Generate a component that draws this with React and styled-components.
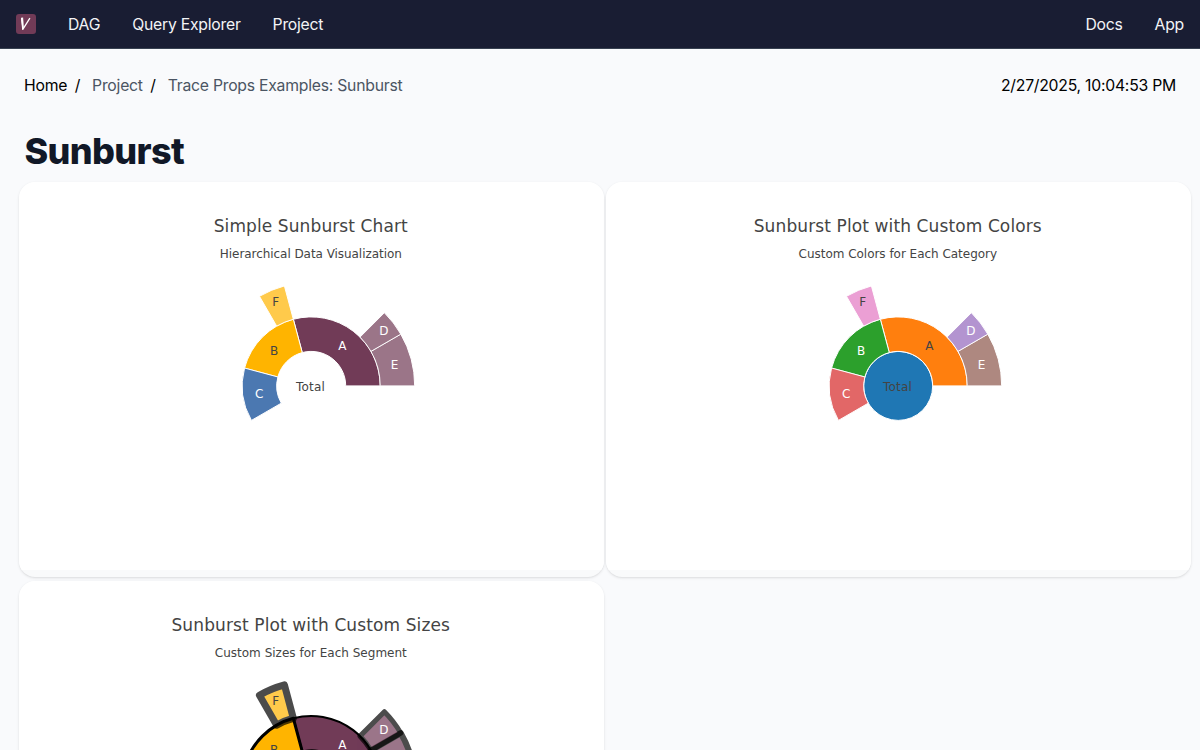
import React from "react";
import styled, { createGlobalStyle } from "styled-components";

const GlobalStyle = createGlobalStyle`
  *, *::before, *::after { box-sizing: border-box; }
  html, body { margin: 0; padding: 0; }
  body {
    background: #f9fafb;
    color: #000;
    font-family: Inter, "Liberation Sans", sans-serif;
    font-size: 15.75px;
    line-height: 24px;
    letter-spacing: -0.24px;
  }
`;

const Page = styled.div`
  height: 100vh;
  overflow: hidden;
  background: #f9fafc;
`;

const NavBar = styled.nav`
  display: flex;
  align-items: center;
  justify-content: space-between;
  height: 49px;
  padding: 0 16px;
  background: #191d33;
  border-bottom: 1px solid #374151;
`;

const NavGroup = styled.div`
  display: flex;
  align-items: center;
  gap: 32px;
`;

const NavLink = styled.a`
  padding-top: 2px;
  color: #f3f4f6;
`;

const Logo = styled.svg`
  display: block;
  width: 20px;
  height: 20px;
`;

const TopRow = styled.div`
  display: flex;
  align-items: center;
  justify-content: space-between;
  padding: 25px 24px 0;
`;

const Crumbs = styled.div`
  display: flex;
`;

const Crumb = styled.span`
  color: ${(p) => (p.$home ? "#000" : "#4b5563")};
`;

const Slash = styled.span`
  margin: 0 12px 0 7.5px;
`;

const Heading = styled.h1`
  margin: 33px 0 11px 24.5px;
  font-size: 36px;
  line-height: 40px;
  font-weight: 780;
  letter-spacing: -0.65px;
  color: #111827;
`;

const Grid = styled.div`
  display: grid;
  grid-template-columns: 585px 585px;
  gap: 4px 2px;
  padding-left: 18.5px;
`;

const Card = styled.section`
  height: 395px;
  border-radius: 16px;
  overflow: hidden;
  background: #f9fafb;
  box-shadow: 0 1px 3px rgba(0, 0, 0, 0.1), 0 1px 2px -1px rgba(0, 0, 0, 0.1);
`;

const Plot = styled.svg`
  display: block;
  width: 585px;
  height: 388px;
  background: #fff;
`;

const PlotText = styled.text`
  font-family: "DejaVu Sans", Verdana, sans-serif;
  font-size: ${(p) => (p.$title ? 17 : 12)}px;
  letter-spacing: 0;
  fill: ${(p) => (p.$light ? "#fff" : "#444")};
  text-anchor: middle;
  white-space: pre;
`;

const CX = 292.2;
const CY = 203.9;
const RING = 34.5;

const point = (r, deg) => {
  const a = (deg * Math.PI) / 180;
  return `${(CX + r * Math.cos(a)).toFixed(3)} ${(CY - r * Math.sin(a)).toFixed(3)}`;
};

const sector = (level, from, to) => {
  const r0 = RING * level;
  const r1 = RING * (level + 1);
  return `M${point(r0, from)}A${r0} ${r0} 0 0 0 ${point(r0, to)}L${point(r1, to)}A${r1} ${r1} 0 0 1 ${point(r1, from)}Z`;
};

// Angles run counter-clockwise from three o'clock; leaves are drawn translucent.
const SLICES = [
  { id: "A", level: 1, from: 0, to: 105, x: 31.1, y: -36.1 },
  { id: "B", level: 1, from: 105, to: 165, x: -37.2, y: -30.9 },
  { id: "C", level: 1, from: 165, to: 210, x: -52, y: 12.1, leaf: true },
  { id: "E", level: 2, from: 0, to: 30, x: 83.3, y: -16.9, leaf: true },
  { id: "D", level: 2, from: 30, to: 45, x: 72.7, y: -50.9, leaf: true },
  { id: "F", level: 2, from: 105, to: 120, x: -35.4, y: -79.9, leaf: true },
];

function Sunburst({ title, titleWidth, subtitle, subtitleWidth, colors, light, widths, line = "#fff" }) {
  const width = (id) => (widths ? widths[id] : 1);
  return (
    <Card>
      <Plot viewBox="0 0 585 388">
        <PlotText $title x={CX - 0.5} y={50} textLength={titleWidth}>{title}</PlotText>
        <PlotText x={CX - 0.4} y={76} textLength={subtitleWidth}>{subtitle}</PlotText>
        <circle cx={CX} cy={CY} r={RING} fill={colors.Total || "none"} stroke={line} strokeWidth={width("Total")} />
        {SLICES.map((s) => (
          <path
            key={s.id}
            d={sector(s.level, s.from, s.to)}
            fill={colors[s.id]}
            stroke={line}
            strokeWidth={width(s.id)}
            strokeLinejoin="round"
            opacity={s.leaf ? 0.7 : 1}
          />
        ))}
        {SLICES.map((s) => (
          <PlotText key={s.id} $light={light.includes(s.id)} x={CX + s.x} y={CY + s.y}>{s.id}</PlotText>
        ))}
        <PlotText x={CX - 0.8} y={CY + 5.1} textLength={29}>Total</PlotText>
      </Plot>
    </Card>
  );
}

const BRAND = { A: "#713b57", B: "#ffb400", C: "#003f91", D: "#713b57", E: "#713b57", F: "#ffb400" };
const CATEGORY = {
  Total: "#1f77b4", A: "#ff7f0e", B: "#2ca02c", C: "#d62728",
  D: "#9467bd", E: "#8c564b", F: "#e377c2",
};

export default function App() {
  return (
    <Page>
      <GlobalStyle />
      <NavBar>
        <NavGroup>
          <Logo viewBox="0 0 20 20">
            <rect width="20" height="20" rx="3" fill="#713b57" />
            <path d="M5.6 4L6.8 15.4L13.9 4.2" fill="none" stroke="#fff" strokeWidth="1.3" strokeLinejoin="round" />
            <path d="M5 3.8L7.1 3.6L7.8 13L6.6 15.8Z" fill="#fff" />
          </Logo>
          <NavLink>DAG</NavLink>
          <NavLink>Query Explorer</NavLink>
          <NavLink>Project</NavLink>
        </NavGroup>
        <NavGroup>
          <NavLink>Docs</NavLink>
          <NavLink>App</NavLink>
        </NavGroup>
      </NavBar>
      <TopRow>
        <Crumbs>
          <Crumb $home>Home</Crumb>
          <Slash>/</Slash>
          <Crumb>Project</Crumb>
          <Slash>/</Slash>
          <Crumb>Trace Props Examples: Sunburst</Crumb>
        </Crumbs>
        <span>2/27/2025, 10:04:53 PM</span>
      </TopRow>
      <Heading>Sunburst</Heading>
      <Grid>
        <Sunburst
          title="Simple Sunburst Chart"
          titleWidth={194}
          subtitle="Hierarchical Data Visualization"
          subtitleWidth={182}
          colors={BRAND}
          light={["A", "C", "D", "E"]}
        />
        <Sunburst
          title="Sunburst Plot with Custom Colors"
          titleWidth={288}
          subtitle="Custom Colors for Each Category"
          subtitleWidth={198.5}
          colors={CATEGORY}
          light={["B", "C", "D", "E"]}
        />
        <Sunburst
          title="Sunburst Plot with Custom Sizes"
          titleWidth={278.5}
          subtitle="Custom Sizes for Each Segment"
          subtitleWidth={192}
          colors={BRAND}
          light={["A", "C", "D", "E"]}
          line="#000"
          widths={{ Total: 1, A: 2, B: 3, C: 4, D: 5, E: 6, F: 7 }}
        />
      </Grid>
    </Page>
  );
}
